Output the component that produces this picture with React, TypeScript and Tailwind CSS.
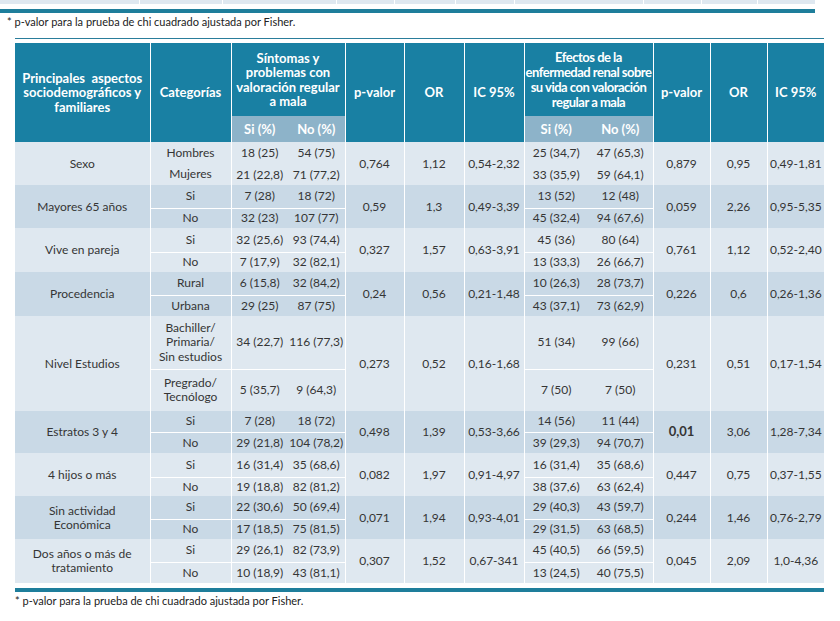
import React from "react";

type Group = {
  label: React.ReactNode;
  rows: [React.ReactNode, string, string, string, string][];
  p1: string;
  or1: string;
  ic1: string;
  p2: React.ReactNode;
  or2: string;
  ic2: string;
  dark: boolean;
  divider: boolean;
  h: [string, string];
};

const groups: Group[] = [
  {
    label: "Sexo",
    rows: [
      ["Hombres", "18 (25)", "54 (75)", "25 (34,7)", "47 (65,3)"],
      ["Mujeres", "21 (22,8)", "71 (77,2)", "33 (35,9)", "59 (64,1)"],
    ],
    p1: "0,764", or1: "1,12", ic1: "0,54-2,32", p2: "0,879", or2: "0,95", ic2: "0,49-1,81",
    dark: false, divider: false, h: ["h-[22px]", "h-[21px]"],
  },
  {
    label: "Mayores 65 años",
    rows: [
      ["Si", "7 (28)", "18 (72)", "13 (52)", "12 (48)"],
      ["No", "32 (23)", "107 (77)", "45 (32,4)", "94 (67,6)"],
    ],
    p1: "0,59", or1: "1,3", ic1: "0,49-3,39", p2: "0,059", or2: "2,26", ic2: "0,95-5,35",
    dark: true, divider: true, h: ["h-[23px]", "h-[20px]"],
  },
  {
    label: "Vive en pareja",
    rows: [
      ["Si", "32 (25,6)", "93 (74,4)", "45 (36)", "80 (64)"],
      ["No", "7 (17,9)", "32 (82,1)", "13 (33,3)", "26 (66,7)"],
    ],
    p1: "0,327", or1: "1,57", ic1: "0,63-3,91", p2: "0,761", or2: "1,12", ic2: "0,52-2,40",
    dark: false, divider: true, h: ["h-[24px]", "h-[20px]"],
  },
  {
    label: "Procedencia",
    rows: [
      ["Rural", "6 (15,8)", "32 (84,2)", "10 (26,3)", "28 (73,7)"],
      ["Urbana", "29 (25)", "87 (75)", "43 (37,1)", "73 (62,9)"],
    ],
    p1: "0,24", or1: "0,56", ic1: "0,21-1,48", p2: "0,226", or2: "0,6", ic2: "0,26-1,36",
    dark: true, divider: true, h: ["h-[23px]", "h-[21px]"],
  },
  {
    label: "Nivel Estudios",
    rows: [
      [<>Bachiller/<br />Primaria/<br />Sin estudios</>, "34 (22,7)", "116 (77,3)", "51 (34)", "99 (66)"],
      [<>Pregrado/<br />Tecnólogo</>, "5 (35,7)", "9 (64,3)", "7 (50)", "7 (50)"],
    ],
    p1: "0,273", or1: "0,52", ic1: "0,16-1,68", p2: "0,231", or2: "0,51", ic2: "0,17-1,54",
    dark: false, divider: true, h: ["h-[53px]", "h-[42px]"],
  },
  {
    label: "Estratos 3 y 4",
    rows: [
      ["Si", "7 (28)", "18 (72)", "14 (56)", "11 (44)"],
      ["No", "29 (21,8)", "104 (78,2)", "39 (29,3)", "94 (70,7)"],
    ],
    p1: "0,498", or1: "1,39", ic1: "0,53-3,66",
    p2: <span className="font-bold text-[13px]">0,01</span>,
    or2: "3,06", ic2: "1,28-7,34",
    dark: true, divider: true, h: ["h-[21px]", "h-[21px]"],
  },
  {
    label: "4 hijos o más",
    rows: [
      ["Si", "16 (31,4)", "35 (68,6)", "16 (31,4)", "35 (68,6)"],
      ["No", "19 (18,8)", "82 (81,2)", "38 (37,6)", "63 (62,4)"],
    ],
    p1: "0,082", or1: "1,97", ic1: "0,91-4,97", p2: "0,447", or2: "0,75", ic2: "0,37-1,55",
    dark: false, divider: true, h: ["h-[24px]", "h-[19px]"],
  },
  {
    label: <>Sin actividad<br />Económica</>,
    rows: [
      ["Si", "22 (30,6)", "50 (69,4)", "29 (40,3)", "43 (59,7)"],
      ["No", "17 (18,5)", "75 (81,5)", "29 (31,5)", "63 (68,5)"],
    ],
    p1: "0,071", or1: "1,94", ic1: "0,93-4,01", p2: "0,244", or2: "1,46", ic2: "0,76-2,79",
    dark: true, divider: true, h: ["h-[23px]", "h-[20px]"],
  },
  {
    label: <>Dos años o más de<br />tratamiento</>,
    rows: [
      ["Si", "29 (26,1)", "82 (73,9)", "45 (40,5)", "66 (59,5)"],
      ["No", "10 (18,9)", "43 (81,1)", "13 (24,5)", "40 (75,5)"],
    ],
    p1: "0,307", or1: "1,52", ic1: "0,67-341", p2: "0,045", or2: "2,09", ic2: "1,0-4,36",
    dark: false, divider: true, h: ["h-[23px]", "h-[21px]"],
  },
];

const topCols = [
  "w-[140px]", "w-[83px]", "w-[114px]", "w-[58px]", "w-[61px]",
  "w-[59px]", "w-[129px]", "w-[58px]", "w-[56px]", "w-[57px]",
];

const th = "p-0 text-white font-bold text-[13px] leading-[14.5px] text-center align-middle";
const td = "p-0 text-center align-middle";
const br = "border-r border-white";

function GroupRows({ g }: { g: Group }) {
  const bg = g.dark ? "bg-[#c9d9e6]" : "bg-[#dfe8f0]";
  const div = g.divider ? "border-t border-white" : "";
  const [r1, r2] = g.rows;
  return (
    <>
      <tr className={`${bg} ${g.h[0]}`}>
        <td rowSpan={2} className={`${td} ${br} leading-[14px]`}>{g.label}</td>
        <td className={`${td} ${br} leading-[14.5px]`}>{r1[0]}</td>
        <td className={td}>{r1[1]}</td>
        <td className={`${td} ${br}`}>{r1[2]}</td>
        <td rowSpan={2} className={`${td} ${br}`}>{g.p1}</td>
        <td rowSpan={2} className={`${td} ${br}`}>{g.or1}</td>
        <td rowSpan={2} className={`${td} ${br}`}>{g.ic1}</td>
        <td className={td}>{r1[3]}</td>
        <td className={`${td} ${br}`}>{r1[4]}</td>
        <td rowSpan={2} className={`${td} ${br}`}>{g.p2}</td>
        <td rowSpan={2} className={`${td} ${br}`}>{g.or2}</td>
        <td rowSpan={2} className={td}>{g.ic2}</td>
      </tr>
      <tr className={`${bg} ${g.h[1]}`}>
        <td className={`${td} ${br} ${div} leading-[14.5px]`}>{r2[0]}</td>
        <td className={`${td} ${div}`}>{r2[1]}</td>
        <td className={`${td} ${br} ${div}`}>{r2[2]}</td>
        <td className={`${td} ${div}`}>{r2[3]}</td>
        <td className={`${td} ${br} ${div}`}>{r2[4]}</td>
      </tr>
    </>
  );
}

export default function App() {
  return (
    <div className="w-[840px] h-[621px] bg-white overflow-hidden [font-family:Lato,sans-serif]">
      <div className="flex w-[815px] h-[4px]">
        {topCols.map((w, i) => (
          <div key={i} className={`${w} h-full bg-[#dfe8f0] ${i < topCols.length - 1 ? "border-r border-white" : ""}`} />
        ))}
      </div>
      <div className="mt-[5px] h-[4px] w-[815px] bg-[#1e7e9b]" />
      <p className="pl-[7px] pt-[2px] h-[25px] text-[11px] leading-[14px] text-[#222]">
        * p-valor para la prueba de chi cuadrado ajustada por Fisher.
      </p>
      <div className="ml-[15px] w-[809px] h-px bg-[#2a7d9b]" />
      <div className="ml-[15px] mt-[4px] w-[809px]">
        <table className="table-fixed border-collapse w-[809px] text-[12px] text-[#353535]">
          <colgroup>
            <col className="w-[135px]" />
            <col className="w-[81px]" />
            <col className="w-[57px]" />
            <col className="w-[57px]" />
            <col className="w-[59px]" />
            <col className="w-[60px]" />
            <col className="w-[60px]" />
            <col className="w-[64px]" />
            <col className="w-[65px]" />
            <col className="w-[57px]" />
            <col className="w-[57px]" />
            <col className="w-[57px]" />
          </colgroup>
          <thead>
            <tr className="h-[73px] bg-[#1980a3]">
              <th rowSpan={2} className={`${th} ${br}`}>
                Principales&nbsp; aspectos<br />sociodemográficos y<br />familiares
              </th>
              <th rowSpan={2} className={`${th} ${br}`}>Categorías</th>
              <th colSpan={2} className={`${th} ${br}`}>
                Síntomas y<br />problemas con<br />valoración regular<br />a mala
              </th>
              <th rowSpan={2} className={`${th} ${br}`}>p-valor</th>
              <th rowSpan={2} className={`${th} ${br}`}>OR</th>
              <th rowSpan={2} className={`${th} ${br}`}>IC 95%</th>
              <th colSpan={2} className={`${th} ${br} leading-[15px] tracking-[-0.5px]`}>
                Efectos de la<br />enfermedad renal sobre<br />su vida con valoración<br />regular a mala
              </th>
              <th rowSpan={2} className={`${th} ${br}`}>p-valor</th>
              <th rowSpan={2} className={`${th} ${br}`}>OR</th>
              <th rowSpan={2} className={th}>IC 95%</th>
            </tr>
            <tr className="h-[26px]">
              <th className={`${th} bg-[#8db3c9]`}>Si (%)</th>
              <th className={`${th} bg-[#8db3c9] ${br}`}>No (%)</th>
              <th className={`${th} bg-[#8db3c9]`}>Si (%)</th>
              <th className={`${th} bg-[#8db3c9] ${br}`}>No (%)</th>
            </tr>
          </thead>
          <tbody>
            {groups.map((g, i) => (
              <GroupRows key={i} g={g} />
            ))}
          </tbody>
        </table>
      </div>
      <div className="ml-[15px] mt-[5px] w-[809px] h-[4px] bg-[#1e7e9b]" />
      <p className="pl-[15px] pt-[2px] text-[11px] leading-[14px] text-[#222]">
        * p-valor para la prueba de chi cuadrado ajustada por Fisher.
      </p>
    </div>
  );
}
